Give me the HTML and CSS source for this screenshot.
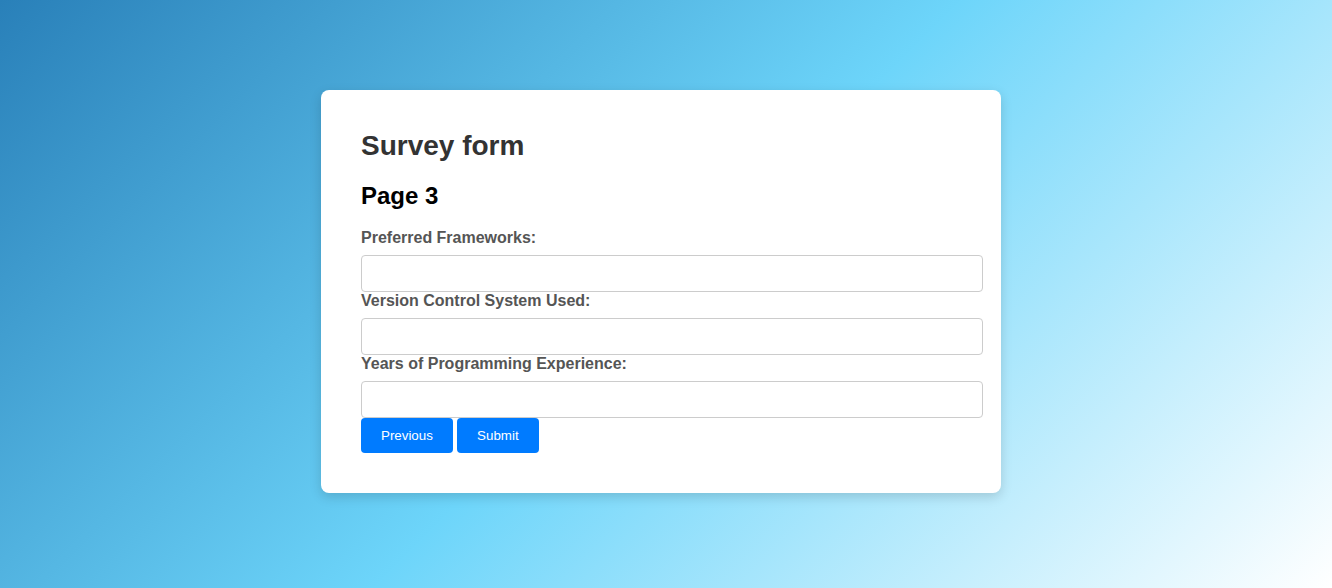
FILE: index.html
```html
<!DOCTYPE html>
<html lang="en">
<head>
<meta charset="utf-8">
<title>Survey form</title>
<link rel="stylesheet" href="styles.css">
</head>
<body>
<div class="card">
  <h1 class="title">Survey form</h1>
  <h2 class="page">Page 3</h2>
  <form class="form">
    <label class="label" for="fw">Preferred Frameworks:</label>
    <input class="input" id="fw" type="text">
    <label class="label" for="vcs">Version Control System Used:</label>
    <input class="input" id="vcs" type="text">
    <label class="label" for="yrs">Years of Programming Experience:</label>
    <input class="input" id="yrs" type="text">
    <div class="buttons">
      <button class="btn" type="button">Previous</button>
      <button class="btn" type="button">Submit</button>
    </div>
  </form>
</div>
</body>
</html>
```

FILE: styles.css
```css
html, body {
  margin: 0;
  height: 100%;
}
body {
  font-family: "Liberation Sans", Arial, sans-serif;
  background: linear-gradient(135deg, #2980b9, #6dd5fa, #ffffff);
  background-attachment: fixed;
  min-height: 588px;
  padding-top: 90px;
  box-sizing: border-box;
}
.card {
  width: 600px;
  padding: 40px;
  margin-left: calc(50% - 345px);
  background: #ffffff;
  border-radius: 8px;
  box-shadow: 0 4px 12px rgba(0, 0, 0, 0.15);
}
.title {
  margin: 0 0 20px 0;
  font-size: 28px;
  line-height: 32px;
  color: #333333;
  font-weight: bold;
}
.page {
  margin: 0 0 19px 0;
  font-size: 24px;
  line-height: 28px;
  color: #000000;
  font-weight: bold;
}
.form {
  margin: 0;
}
.label {
  display: block;
  font-size: 16px;
  line-height: 18px;
  font-weight: bold;
  color: #555555;
  margin-bottom: 8px;
}
.input {
  display: block;
  width: 100%;
  padding: 10px;
  margin: 0;
  border: 1px solid #cccccc;
  border-radius: 4px;
  font-family: "Liberation Sans", Arial, sans-serif;
  font-size: 13.333px;
  line-height: 15px;
  height: 15px;
  background: #ffffff;
}
.buttons {
  display: flex;
  gap: 4px;
}
.btn {
  background: #007bff;
  color: #ffffff;
  border: none;
  border-radius: 4px;
  padding: 10px 20px;
  min-width: 82px;
  font-family: "Liberation Sans", Arial, sans-serif;
  font-size: 13.333px;
  line-height: 15px;
  cursor: pointer;
}
```
